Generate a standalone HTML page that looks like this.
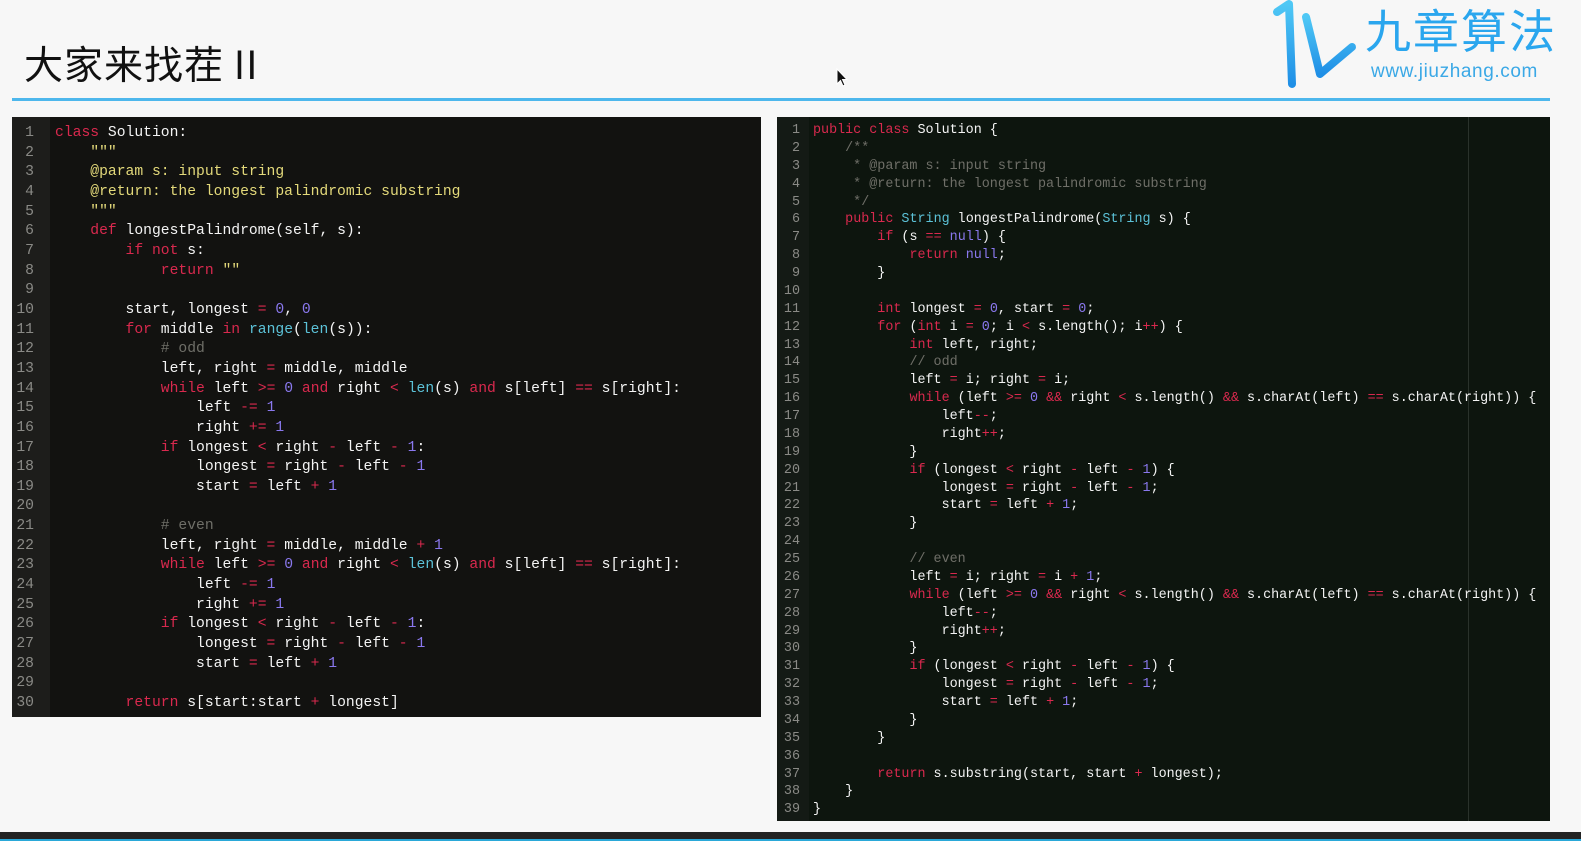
<!DOCTYPE html>
<html><head><meta charset="utf-8"><style>
*{margin:0;padding:0;box-sizing:border-box}
body{width:1581px;height:841px;background:#f7f7f7;position:relative;overflow:hidden;font-family:"Liberation Sans","Noto Sans CJK SC",sans-serif}
.title{position:absolute;left:24px;top:35px;font-size:39px;color:#111;font-family:"Noto Sans CJK SC","WenQuanYi Zen Hei",sans-serif;letter-spacing:1px}
.hr{position:absolute;left:12px;top:98px;width:1538px;height:3px;background:#4db7ec}
.logo{position:absolute;left:1365px;top:2px;font-size:46px;color:#2aa6ee;font-family:"Noto Sans CJK SC",sans-serif;letter-spacing:2px;line-height:54px}
.url{position:absolute;left:1371px;top:61px;font-size:19px;color:#3aa8e6;font-family:"Liberation Sans",sans-serif;letter-spacing:0.6px}
.panel{position:absolute;overflow:hidden}
.code{position:absolute;white-space:pre;font-family:"Liberation Mono",monospace;color:#f4f4f4}
.ln{position:absolute;white-space:pre;font-family:"Liberation Mono",monospace;color:#8a8a86;text-align:right}
.k{color:#d9294e}.n{color:#8a78ee}.b{color:#5cc2d8}.s{color:#e3d97a}.c{color:#6f6f68}
</style></head><body>
<div class="title">大家来找茬 II</div>
<svg style="position:absolute;left:0;top:0" width="1581" height="100">
<defs><linearGradient id="g" x1="0" y1="0" x2="0" y2="1"><stop offset="0" stop-color="#4fc8f5"/><stop offset="1" stop-color="#1f8fe6"/></linearGradient></defs>
<path d="M1277 12 L1289 4 L1292 84" stroke="url(#g)" stroke-width="8" stroke-linecap="round" stroke-linejoin="round" fill="none"/>
<path d="M1306 17 L1320 74 L1352 47" stroke="url(#g)" stroke-width="8" stroke-linecap="round" stroke-linejoin="round" fill="none"/>
</svg>
<div class="logo">九章算法</div>
<div class="url">www.jiuzhang.com</div>
<div class="hr"></div>

<div class="panel" style="left:12px;top:117px;width:749px;height:600px;background:#121210">
<div style="position:absolute;left:0;top:0;width:38px;height:600px;background:#1d1d1b"></div>
<div class="ln" style="left:0;top:7px;width:22px;font-size:14.7px;line-height:19.66px">1
2
3
4
5
6
7
8
9
10
11
12
13
14
15
16
17
18
19
20
21
22
23
24
25
26
27
28
29
30</div>
<div class="code" style="left:43px;top:7px;font-size:14.7px;line-height:19.66px"><span class="k">class</span> Solution:
    <span class="s">"""</span>
    <span class="s">@param s: input string</span>
    <span class="s">@return: the longest palindromic substring</span>
    <span class="s">"""</span>
    <span class="k">def</span> longestPalindrome(self, s):
        <span class="k">if not</span> s:
            <span class="k">return</span> <span class="s">""</span>

        start, longest <span class="k">=</span> <span class="n">0</span>, <span class="n">0</span>
        <span class="k">for</span> middle <span class="k">in</span> <span class="b">range</span>(<span class="b">len</span>(s)):
            <span class="c"># odd</span>
            left, right <span class="k">=</span> middle, middle
            <span class="k">while</span> left <span class="k">&gt;=</span> <span class="n">0</span> <span class="k">and</span> right <span class="k">&lt;</span> <span class="b">len</span>(s) <span class="k">and</span> s[left] <span class="k">==</span> s[right]:
                left <span class="k">-=</span> <span class="n">1</span>
                right <span class="k">+=</span> <span class="n">1</span>
            <span class="k">if</span> longest <span class="k">&lt;</span> right <span class="k">-</span> left <span class="k">-</span> <span class="n">1</span>:
                longest <span class="k">=</span> right <span class="k">-</span> left <span class="k">-</span> <span class="n">1</span>
                start <span class="k">=</span> left <span class="k">+</span> <span class="n">1</span>

            <span class="c"># even</span>
            left, right <span class="k">=</span> middle, middle <span class="k">+</span> <span class="n">1</span>
            <span class="k">while</span> left <span class="k">&gt;=</span> <span class="n">0</span> <span class="k">and</span> right <span class="k">&lt;</span> <span class="b">len</span>(s) <span class="k">and</span> s[left] <span class="k">==</span> s[right]:
                left <span class="k">-=</span> <span class="n">1</span>
                right <span class="k">+=</span> <span class="n">1</span>
            <span class="k">if</span> longest <span class="k">&lt;</span> right <span class="k">-</span> left <span class="k">-</span> <span class="n">1</span>:
                longest <span class="k">=</span> right <span class="k">-</span> left <span class="k">-</span> <span class="n">1</span>
                start <span class="k">=</span> left <span class="k">+</span> <span class="n">1</span>

        <span class="k">return</span> s[start:start <span class="k">+</span> longest]</div>
</div>

<div class="panel" style="left:777px;top:117px;width:773px;height:704px;background:#0d150e">
<div style="position:absolute;left:0;top:0;width:32px;height:704px;background:#141a15"></div>
<div style="position:absolute;left:691px;top:0;width:1px;height:704px;background:#2a322b"></div>
<div class="ln" style="left:0;top:5px;width:23px;font-size:13.4px;line-height:17.87px">1
2
3
4
5
6
7
8
9
10
11
12
13
14
15
16
17
18
19
20
21
22
23
24
25
26
27
28
29
30
31
32
33
34
35
36
37
38
39</div>
<div class="code" style="left:36px;top:5px;font-size:13.4px;line-height:17.87px"><span class="k">public class</span> Solution {
    <span class="c">/**</span>
<span class="c">     * @param s: input string</span>
<span class="c">     * @return: the longest palindromic substring</span>
<span class="c">     */</span>
    <span class="k">public</span> <span class="b">String</span> longestPalindrome(<span class="b">String</span> s) {
        <span class="k">if</span> (s <span class="k">==</span> <span class="n">null</span>) {
            <span class="k">return</span> <span class="n">null</span>;
        }

        <span class="k">int</span> longest <span class="k">=</span> <span class="n">0</span>, start <span class="k">=</span> <span class="n">0</span>;
        <span class="k">for</span> (<span class="k">int</span> i <span class="k">=</span> <span class="n">0</span>; i <span class="k">&lt;</span> s.length(); i<span class="k">++</span>) {
            <span class="k">int</span> left, right;
            <span class="c">// odd</span>
            left <span class="k">=</span> i; right <span class="k">=</span> i;
            <span class="k">while</span> (left <span class="k">&gt;=</span> <span class="n">0</span> <span class="k">&amp;&amp;</span> right <span class="k">&lt;</span> s.length() <span class="k">&amp;&amp;</span> s.charAt(left) <span class="k">==</span> s.charAt(right)) {
                left<span class="k">--</span>;
                right<span class="k">++</span>;
            }
            <span class="k">if</span> (longest <span class="k">&lt;</span> right <span class="k">-</span> left <span class="k">-</span> <span class="n">1</span>) {
                longest <span class="k">=</span> right <span class="k">-</span> left <span class="k">-</span> <span class="n">1</span>;
                start <span class="k">=</span> left <span class="k">+</span> <span class="n">1</span>;
            }

            <span class="c">// even</span>
            left <span class="k">=</span> i; right <span class="k">=</span> i <span class="k">+</span> <span class="n">1</span>;
            <span class="k">while</span> (left <span class="k">&gt;=</span> <span class="n">0</span> <span class="k">&amp;&amp;</span> right <span class="k">&lt;</span> s.length() <span class="k">&amp;&amp;</span> s.charAt(left) <span class="k">==</span> s.charAt(right)) {
                left<span class="k">--</span>;
                right<span class="k">++</span>;
            }
            <span class="k">if</span> (longest <span class="k">&lt;</span> right <span class="k">-</span> left <span class="k">-</span> <span class="n">1</span>) {
                longest <span class="k">=</span> right <span class="k">-</span> left <span class="k">-</span> <span class="n">1</span>;
                start <span class="k">=</span> left <span class="k">+</span> <span class="n">1</span>;
            }
        }

        <span class="k">return</span> s.substring(start, start <span class="k">+</span> longest);
    }
}</div>
</div>

<div style="position:absolute;left:0;top:832px;width:1581px;height:9px;background:#232323"></div>
<div style="position:absolute;left:0;top:839px;width:1581px;height:2px;background:#2aa8d8"></div>
<svg style="position:absolute;left:836px;top:68px" width="12" height="20" viewBox="0 0 12 20"><path d="M1 1 L1 16 L4.5 12.5 L7 18 L9 17 L6.5 11.5 L11 11.5 Z" fill="#111" stroke="#fff" stroke-width="1"/></svg>
</body></html>
